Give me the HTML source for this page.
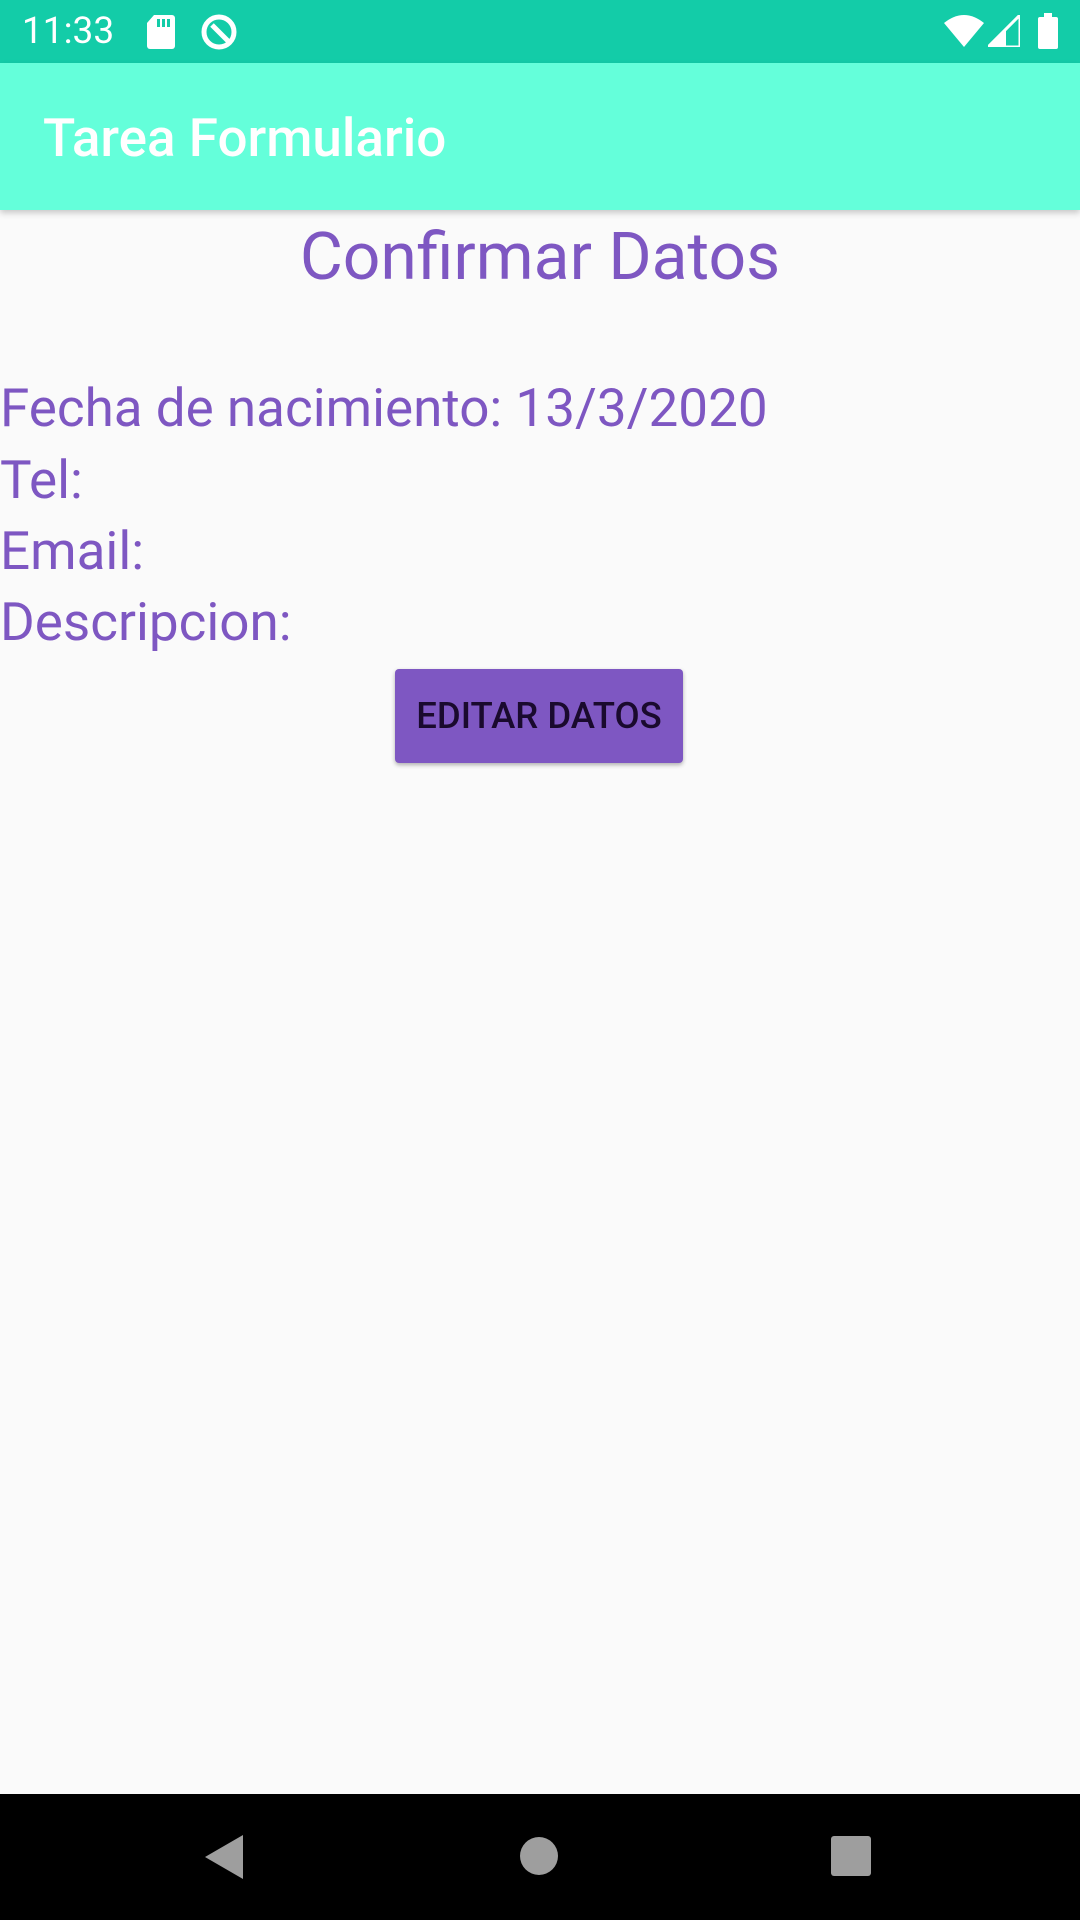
<!DOCTYPE html>
<html><head><meta charset="utf-8"><style>
*{margin:0;padding:0;box-sizing:border-box}
body{width:1080px;height:1920px;background:#fafafa;font-family:"Roboto","Liberation Sans",sans-serif;position:relative;overflow:hidden}
.status{position:absolute;top:0;left:0;width:1080px;height:63px;background:#13cca8;color:#fff}
.appbar{position:absolute;top:63px;left:0;width:1080px;height:147px;background:#64ffda;box-shadow:0 3px 6px rgba(0,0,0,.2)}
.appbar span{position:absolute;left:43px;top:44px;font-size:53px;color:#fff;font-weight:500}
.h{position:absolute;top:218px;left:0;width:1080px;text-align:center;font-size:66px;color:#7e57c2;line-height:80px}
.l{position:absolute;left:0;font-size:53px;color:#7e57c2;line-height:71px}
.btn{position:absolute;left:395px;top:669px;width:288px;height:94px;background:#7e57c2;border-radius:4px;box-shadow:0 2px 4px rgba(0,0,0,.3);color:#1a0a2e;font-size:36.5px;font-weight:500;text-align:center;line-height:94px}
.nav{position:absolute;top:1794px;left:0;width:1080px;height:126px;background:#000}
</style></head><body>
<div class="status">
<span style="position:absolute;left:22px;top:10px;font-size:37px">11:33</span>
<svg style="position:absolute;left:146px;top:15px" width="30" height="34" viewBox="0 0 30 34"><path d="M8 0h18a3 3 0 0 1 3 3v28a3 3 0 0 1-3 3H4a3 3 0 0 1-3-3V8z" fill="#fff"/><rect x="11" y="4" width="3" height="8" fill="#13cca8"/><rect x="16" y="4" width="3" height="8" fill="#13cca8"/><rect x="21" y="4" width="3" height="8" fill="#13cca8"/></svg>
<svg style="position:absolute;left:200px;top:13px" width="38" height="38" viewBox="0 0 38 38"><circle cx="19" cy="19" r="15" fill="none" stroke="#fff" stroke-width="5"/><path d="M12 12l16 16" stroke="#fff" stroke-width="5"/></svg>
<svg style="position:absolute;left:944px;top:15px" width="40" height="32" viewBox="0 0 40 32"><path d="M0 8Q20-8 40 8L20 32z" fill="#fff"/></svg>
<svg style="position:absolute;left:988px;top:15px" width="32" height="32" viewBox="0 0 32 32"><path d="M32 0V32H0z" fill="none" stroke="#fff" stroke-width="3"/><path d="M18 14V32H0z" fill="#fff"/></svg>
<svg style="position:absolute;left:1038px;top:13px" width="20" height="36" viewBox="0 0 20 36"><rect x="6" y="0" width="8" height="4" fill="#fff"/><rect x="0" y="4" width="20" height="32" rx="2" fill="#fff"/></svg>
</div>
<div class="appbar"><span>Tarea Formulario</span></div>
<div class="h">Confirmar Datos</div>
<div class="l" style="top:373px">Fecha de nacimiento: 13/3/2020</div>
<div class="l" style="top:445px">Tel:</div>
<div class="l" style="top:516px">Email:</div>
<div class="l" style="top:587px">Descripcion:</div>
<div class="btn">EDITAR DATOS</div>
<div class="nav">
<svg style="position:absolute;left:205px;top:41px" width="40" height="44" viewBox="0 0 40 44"><path d="M38 0V44L0 22z" fill="#9e9e9e"/></svg>
<div style="position:absolute;left:520px;top:43px;width:38px;height:38px;border-radius:50%;background:#9e9e9e"></div>
<div style="position:absolute;left:831px;top:42px;width:40px;height:40px;border-radius:3px;background:#9e9e9e"></div>
</div>
</body></html>
